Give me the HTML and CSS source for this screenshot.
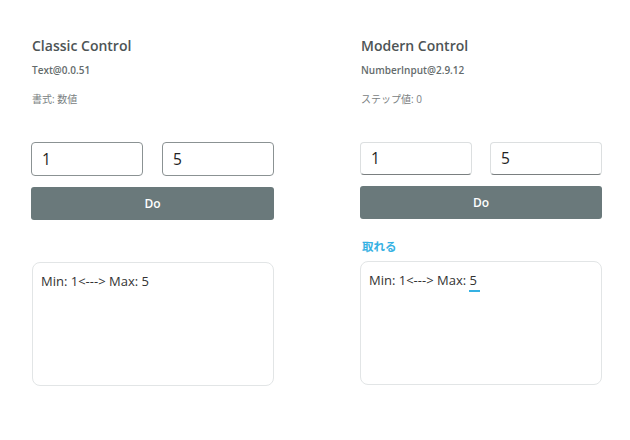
FILE: index.html
```html
<!DOCTYPE html>
<html>
<head>
<meta charset="utf-8">
<link rel="stylesheet" href="styles.css">
</head>
<body>
<div class="page">
  <section class="col">
    <h2 class="title">Classic Control</h2>
    <div class="ver">Text@0.0.51</div>
    <div class="note">書式: 数値</div>
    <div class="inputs">
      <div class="field classic">1</div>
      <div class="field classic">5</div>
    </div>
    <button class="btn">Do</button>
    <div class="label"></div>
    <div class="output"><span>Min: 1&lt;---&gt; Max: 5</span></div>
  </section>
  <section class="col">
    <h2 class="title">Modern Control</h2>
    <div class="ver">NumberInput@2.9.12</div>
    <div class="note">ステップ値: 0</div>
    <div class="inputs">
      <div class="field modern">1</div>
      <div class="field modern">5</div>
    </div>
    <button class="btn">Do</button>
    <div class="label">取れる</div>
    <div class="output"><span>Min: 1&lt;---&gt; Max: <span class="mark">5&nbsp;</span></span></div>
  </section>
</div>
</body>
</html>
```
FILE: styles.css
```css
html, body {
  margin: 0;
  padding: 0;
  background: #ffffff;
  width: 630px;
  height: 440px;
  overflow: hidden;
}
body {
  font-family: "Open Sans", "Noto Sans CJK JP", sans-serif;
  color: #333;
}
.page {
  display: grid;
  grid-template-columns: 243px 242px;
  column-gap: 86px;
  padding: 35px 0 0 31px;
}
.col {
  display: flex;
  flex-direction: column;
}
.title {
  margin: 0 0 0 1px;
  font-size: 14px;
  line-height: 22px;
  font-weight: 600;
  color: #4d5455;
}
.ver {
  margin: 6px 0 0 1px;
  font-size: 10px;
  line-height: 14px;
  font-weight: 600;
  color: #646b6c;
}
.note {
  margin: 15px 0 0 1px;
  font-size: 10px;
  line-height: 14px;
  color: #7a8182;
}
.inputs {
  margin-top: 36px;
  display: flex;
  justify-content: space-between;
}
.field {
  box-sizing: border-box;
  width: 112px;
  height: 34px;
  padding: 0 0 0 10px;
  font-size: 15.5px;
  line-height: 32px;
  color: #222;
  border-radius: 4px;
  background: #fff;
}
.classic {
  border: 1px solid #8b9293;
}
.modern {
  height: 33px;
  border: 1px solid #dcdfe0;
  border-bottom: 1px solid #7a7f80;
  line-height: 31px;
}
.btn {
  margin-top: 11px;
  height: 33px;
  border: none;
  border-radius: 3px;
  background: #6a797b;
  color: #fff;
  font-family: inherit;
  font-size: 12px;
  font-weight: 600;
  padding: 0;
}
.label {
  height: 20px;
  margin-top: 20px;
  margin-left: 2px;
  font-size: 11.5px;
  line-height: 16px;
  font-weight: 700;
  color: #35b1e3;
}
.output {
  box-sizing: border-box;
  margin-top: 2px;
  height: 124px;
  border: 1px solid #e2e5e6;
  border-radius: 8px;
  padding: 8px 0 0 8px;
  font-size: 13px;
  line-height: 20px;
  color: #333;
}
.col:first-child .output {
  margin-left: 1px;
  width: 242px;
}
.mark {
  border-bottom: 2px solid #35b1e3;
  padding-bottom: 1px;
}
```
